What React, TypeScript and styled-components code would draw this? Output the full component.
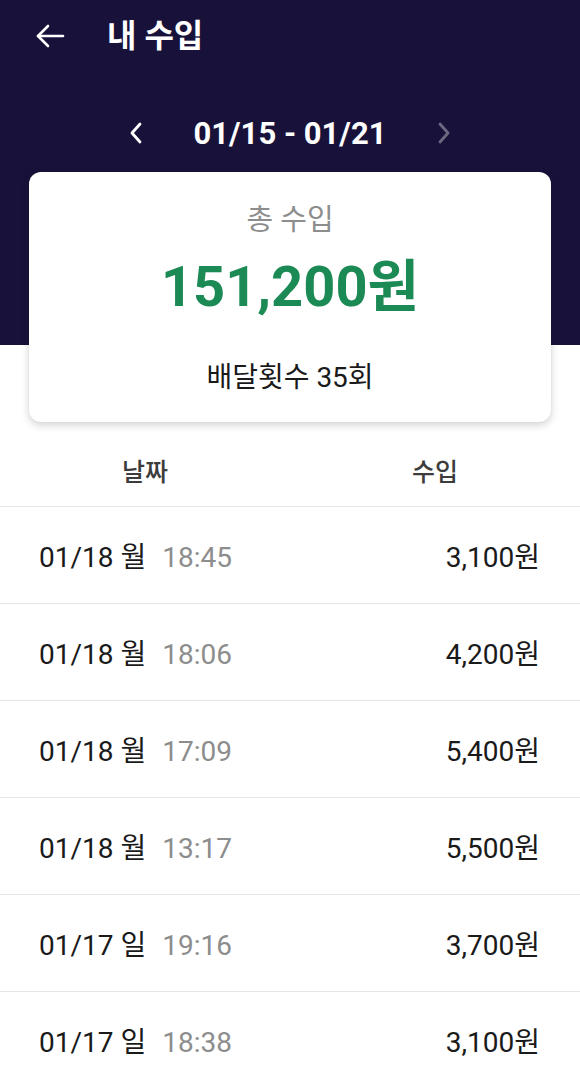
import React from "react";
import styled, { createGlobalStyle } from "styled-components";

const Global = createGlobalStyle`
  html, body { margin: 0; padding: 0; background: #ffffff; }
  body { font-family: Roboto, "Noto Sans CJK KR", "Noto Sans", sans-serif; -webkit-font-smoothing: antialiased; }
  * { box-sizing: border-box; }
`;

const Page = styled.div`
  width: 580px;
  min-height: 1071px;
  background: #ffffff;
  overflow: hidden;
`;

const Hero = styled.div`
  background: linear-gradient(to bottom, #18123b 0, #18123b 345px, #ffffff 345px);
  display: flex;
  flex-direction: column;
`;

const TopBar = styled.div`
  height: 72px;
  display: flex;
  align-items: center;
  padding-left: 35px;
  gap: 42px;
`;

const IconButton = styled.button<{ $muted?: boolean }>`
  background: none;
  border: none;
  padding: 0;
  display: flex;
  align-items: center;
  justify-content: center;
  cursor: pointer;
  color: ${(p) => (p.$muted ? "#6b6880" : "#ffffff")};
`;

const Title = styled.h1`
  margin: 0;
  color: #ffffff;
  font-size: 32px;
  font-weight: 700;
  line-height: 36px;
`;

const DateNav = styled.div`
  margin-top: 30px;
  height: 62px;
  display: flex;
  align-items: center;
  justify-content: center;
  gap: 42px;
`;

const DateRange = styled.div`
  color: #ffffff;
  font-size: 31px;
  font-weight: 700;
  width: 210px;
  text-align: center;
`;

const Card = styled.section`
  margin: 8px 29px 0;
  background: #ffffff;
  border-radius: 12px;
  box-shadow: 0 3px 8px rgba(0, 0, 0, 0.18), 0 0 2px rgba(0, 0, 0, 0.06);
  padding: 30px 0 26px;
  display: flex;
  flex-direction: column;
  align-items: center;
`;

const CardLabel = styled.div`
  color: #8d8d8d;
  font-size: 29px;
  line-height: 36px;
`;

const Amount = styled.div`
  margin-top: 16px;
  color: #1c8a55;
  font-size: 56px;
  font-weight: 700;
  line-height: 66px;
`;

const Count = styled.div`
  margin-top: 40px;
  color: #1a1a1a;
  font-size: 28px;
  line-height: 36px;
`;

const TableHead = styled.div`
  height: 85px;
  padding-top: 11px;
  display: grid;
  grid-template-columns: 1fr 1fr;
  align-items: center;
  border-bottom: 1px solid #e6e6e6;
`;

const HeadCell = styled.div`
  text-align: center;
  color: #3c3c3c;
  font-size: 25px;
  font-weight: 500;
`;

const Row = styled.div`
  height: 97px;
  display: flex;
  align-items: center;
  justify-content: space-between;
  padding: 0 40px 0 39px;
  border-bottom: 1px solid #e6e6e6;
  font-size: 28px;
  color: #1a1a1a;
`;

const DateText = styled.span`
  color: #1a1a1a;
`;

const TimeText = styled.span`
  margin-left: 16px;
  color: #8d8d8d;
`;

const Money = styled.span`
  color: #1a1a1a;
`;

const rows = [
  { date: "01/18 월", time: "18:45", amount: "3,100원" },
  { date: "01/18 월", time: "18:06", amount: "4,200원" },
  { date: "01/18 월", time: "17:09", amount: "5,400원" },
  { date: "01/18 월", time: "13:17", amount: "5,500원" },
  { date: "01/17 일", time: "19:16", amount: "3,700원" },
  { date: "01/17 일", time: "18:38", amount: "3,100원" },
];

const BackArrow = () => (
  <svg width="30" height="28" viewBox="0 0 30 28" fill="none" stroke="currentColor" strokeWidth="2.6" strokeLinecap="round" strokeLinejoin="round">
    <path d="M28 14H3" />
    <path d="M13 4L3 14L13 24" />
  </svg>
);

const Chevron = ({ dir }: { dir: "left" | "right" }) => (
  <svg width="14" height="24" viewBox="0 0 14 24" fill="none" stroke="currentColor" strokeWidth="2.8" strokeLinecap="round" strokeLinejoin="round">
    {dir === "left" ? <path d="M11 3L3 12L11 21" /> : <path d="M3 3L11 12L3 21" />}
  </svg>
);

export default function App() {
  return (
    <Page>
      <Global />
      <Hero>
        <TopBar>
          <IconButton aria-label="back">
            <BackArrow />
          </IconButton>
          <Title>내 수입</Title>
        </TopBar>
        <DateNav>
          <IconButton aria-label="previous">
            <Chevron dir="left" />
          </IconButton>
          <DateRange>01/15 - 01/21</DateRange>
          <IconButton $muted aria-label="next">
            <Chevron dir="right" />
          </IconButton>
        </DateNav>
        <Card>
          <CardLabel>총 수입</CardLabel>
          <Amount>151,200원</Amount>
          <Count>배달횟수 35회</Count>
        </Card>
      </Hero>
      <TableHead>
        <HeadCell>날짜</HeadCell>
        <HeadCell>수입</HeadCell>
      </TableHead>
      {rows.map((r, i) => (
        <Row key={i}>
          <span>
            <DateText>{r.date}</DateText>
            <TimeText>{r.time}</TimeText>
          </span>
          <Money>{r.amount}</Money>
        </Row>
      ))}
    </Page>
  );
}
